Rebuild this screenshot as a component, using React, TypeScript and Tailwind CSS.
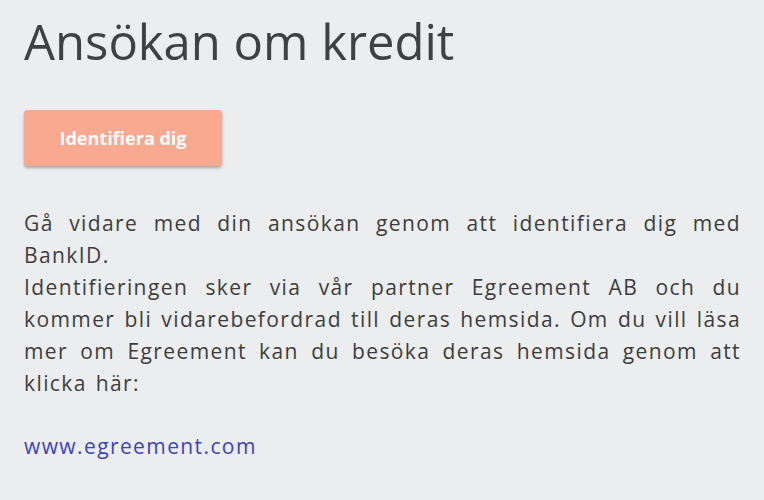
export default function App() {
  return (
    <div className="min-h-[500px] w-full bg-[#ebedef] px-6 pt-[11px] font-['Open_Sans','Noto_Sans',sans-serif] text-[#3f4244]">
      <h1 className="text-[49px] font-normal leading-[60px] tracking-[0px] text-[#3f4244]">Ansökan om kredit</h1>
      <button className="mt-[39px] flex h-[56px] w-[198px] items-center justify-center rounded-[4px] bg-[#f8a98f] text-[18px] font-bold text-white shadow-[0_2px_3px_rgba(0,0,0,0.3)]">
        Identifiera dig
      </button>
      <div className="mt-[41px] w-[717px] text-justify text-[21px] leading-[32px] tracking-[1.4px] [word-spacing:2px] text-[#3d3d3d]">
        <p>Gå vidare med din ansökan genom att identifiera dig med BankID.</p>
        <p>
          Identifieringen sker via vår partner Egreement AB och du kommer bli vidarebefordrad till deras hemsida. Om du vill läsa mer om Egreement kan du besöka deras hemsida genom att klicka här:
        </p>
        <p className="mt-[31px]">
          <a className="text-[#3c44b8]">www.egreement.com</a>
        </p>
      </div>
    </div>
  );
}
